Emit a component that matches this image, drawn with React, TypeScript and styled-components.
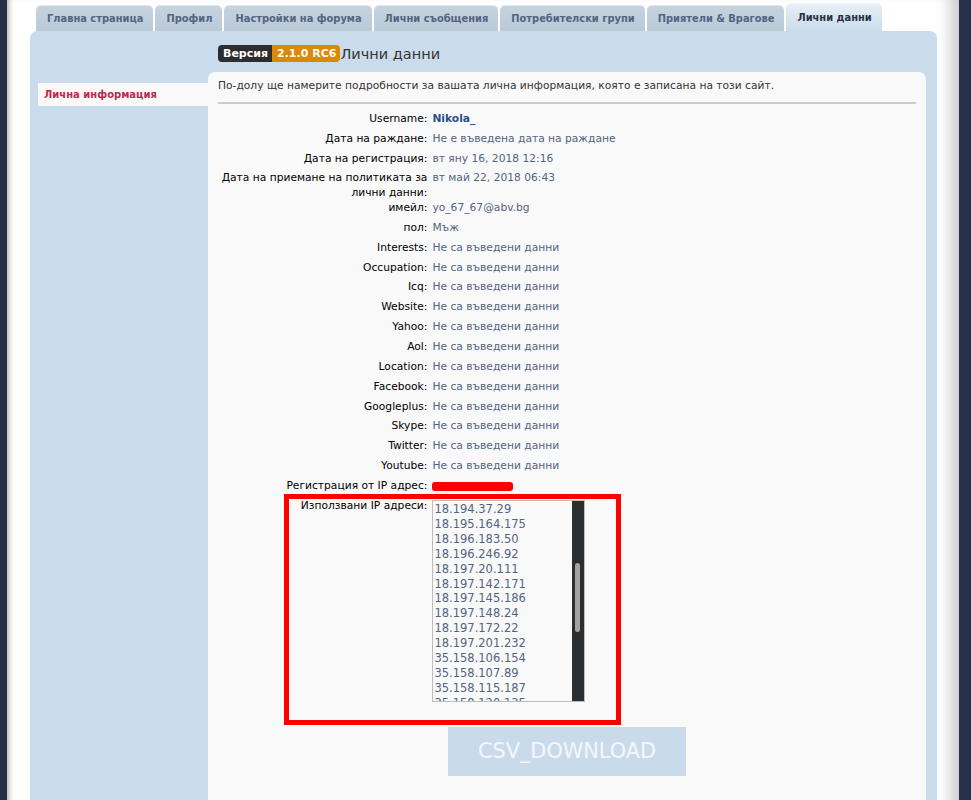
import { useLayoutEffect, useRef } from "react";
import styled, { createGlobalStyle } from "styled-components";

const GlobalStyle = createGlobalStyle`
  body {
    margin: 0;
    background: #263149;
    font-family: "DejaVu Sans", Verdana, sans-serif;
  }
`;

const Wrap = styled.div`
  margin: 0 12px 0 7px;
  min-height: 100vh;
  background: #fff;
  padding: 3px 22px 0 23px;
  box-shadow: inset 6px 0 5px -4px rgba(0, 0, 0, 0.3),
    inset -20px 0 16px -12px rgba(0, 0, 0, 0.22);
`;

const Tabs = styled.ul`
  display: flex;
  align-items: flex-end;
  gap: 2px;
  height: 28px;
  margin: 0 0 0 6px;
  padding: 0;
  list-style: none;
`;

const Tab = styled.li<{ $active?: boolean }>`
  display: flex;
  align-items: center;
  height: ${(p) => (p.$active ? 28 : 26)}px;
  padding: 0 10px 0 11px;
  border-radius: 5px 5px 0 0;
  white-space: nowrap;
  font-size: 9.9px;
  font-weight: bold;
  color: ${(p) => (p.$active ? "#28313f" : "#536482")};
  background: ${(p) =>
    p.$active
      ? "linear-gradient(#e8f0f8, #cadceb)"
      : "linear-gradient(#c6d4e0, #b9c9d6)"};
  box-shadow: inset 0 1px 0 rgba(255, 255, 255, 0.45);
`;

const Panel = styled.div`
  display: grid;
  grid-template-columns: 170px 1fr;
  grid-template-rows: auto 1fr;
  min-height: calc(100vh - 31px);
  padding: 0 11px 0 8px;
  background: #cadceb;
  border-radius: 7px 7px 0 0;
`;

const Header = styled.h2`
  grid-column: 2;
  display: flex;
  align-items: center;
  height: 17px;
  margin: 0;
  padding: 14px 10px 10px;
  font-size: 14.5px;
  font-weight: normal;
  color: #333;
`;

const Badge = styled.span<{ $tone: "dark" | "orange" }>`
  display: inline-flex;
  align-items: center;
  height: 17px;
  padding: 0 4px 0 5px;
  font-size: 11px;
  font-weight: bold;
  color: #fff;
  background: ${(p) => (p.$tone === "dark" ? "#2d2d2d" : "#dc8800")};
  border-radius: ${(p) => (p.$tone === "dark" ? "4px 0 0 4px" : "0 4px 4px 0")};
`;

const Sidebar = styled.ul`
  grid-column: 1;
  margin: 0;
  padding: 11px 0 0;
  list-style: none;
`;

const MenuItem = styled.li`
  height: 23px;
  line-height: 23px;
  padding-left: 6px;
  background: #f9f9f9;
  font-size: 10px;
  font-weight: bold;
  color: #bc2a4d;
`;

const Main = styled.div`
  grid-column: 2;
  padding: 7px 10px 40px;
  background: #f9f9f9;
  border-radius: 7px 7px 0 0;
  font-size: 10.7px;
  line-height: 14.85px;
`;

const Intro = styled.p`
  margin: 0;
  color: #333;
`;

const Rule = styled.hr`
  height: 0;
  margin: 8px 0 8px;
  border: 0;
  border-top: 2px solid #ccc;
`;

const Details = styled.dl`
  margin: 0;
`;

const Row = styled.div`
  position: relative;
  display: flex;
  align-items: flex-start;
`;

const Label = styled.dt`
  flex: 0 0 30%;
  margin: 0;
  text-align: right;
  color: #000;
`;

const Value = styled.dd<{ $strong?: boolean }>`
  margin: 0 0 0 5px;
  padding-bottom: 5px;
  color: ${(p) => (p.$strong ? "#2a5286" : "#536482")};
  font-weight: ${(p) => (p.$strong ? "bold" : "normal")};
`;

const Redacted = styled.span`
  display: inline-block;
  width: 81px;
  height: 9px;
  margin-top: 3px;
  background: #f00;
  border-radius: 3px;
  vertical-align: top;
`;

const IpBox = styled.div`
  display: flex;
  box-sizing: border-box;
  width: 153px;
  height: 202px;
  margin: 1px 0 0 5px;
  background: #f9f9f9;
  border: 1px solid #bdbdbd;
`;

const IpList = styled.div`
  flex: 1;
  padding: 3px 0 2px 1px;
  overflow: hidden;
  font-size: 11.5px;
  line-height: 14.875px;
  color: #536482;
`;

const ScrollTrack = styled.div`
  box-sizing: border-box;
  width: 12px;
  padding: 62px 4px 0 3px;
  background: #2a2e31;
`;

const ScrollThumb = styled.div`
  height: 69px;
  background: #a3a3a3;
  border-radius: 3px;
`;

const Marker = styled.div`
  position: absolute;
  left: 66px;
  top: -5px;
  box-sizing: border-box;
  width: 337px;
  height: 231px;
  border: 5px solid #f00;
  pointer-events: none;
`;

const Download = styled.button`
  display: block;
  width: 238px;
  height: 49px;
  margin: 25px auto 0;
  padding: 0;
  border: 0;
  background: #c9dbea;
  color: #f4f7fa;
  font-family: "DejaVu Sans", Verdana, sans-serif;
  font-size: 20.8px;
`;

const tabs = [
  "Главна страница",
  "Профил",
  "Настройки на форума",
  "Лични съобщения",
  "Потребителски групи",
  "Приятели & Врагове",
  "Лични данни",
];

const empty = "Не са въведени данни";

const fields: [string, string][] = [
  ["Дата на раждане:", "Не е въведена дата на раждане"],
  ["Дата на регистрация:", "вт яну 16, 2018 12:16"],
  ["Дата на приемане на политиката за лични данни:", "вт май 22, 2018 06:43"],
  ["имейл:", "yo_67_67@abv.bg"],
  ["пол:", "Мъж"],
  ["Interests:", empty],
  ["Occupation:", empty],
  ["Icq:", empty],
  ["Website:", empty],
  ["Yahoo:", empty],
  ["Aol:", empty],
  ["Location:", empty],
  ["Facebook:", empty],
  ["Googleplus:", empty],
  ["Skype:", empty],
  ["Twitter:", empty],
  ["Youtube:", empty],
];

const ips = [
  "13.48.12.201",
  "13.48.77.163",
  "13.53.146.20",
  "13.53.208.95",
  "18.130.92.14",
  "18.130.211.7",
  "18.184.33.160",
  "18.184.190.42",
  "18.185.4.231",
  "18.185.121.88",
  "18.185.243.19",
  "18.194.22.170",
  "18.194.37.29",
  "18.195.164.175",
  "18.196.183.50",
  "18.196.246.92",
  "18.197.20.111",
  "18.197.142.171",
  "18.197.145.186",
  "18.197.148.24",
  "18.197.172.22",
  "18.197.201.232",
  "35.158.106.154",
  "35.158.107.89",
  "35.158.115.187",
  "35.158.120.135",
  "35.158.161.46",
  "35.158.185.230",
  "35.159.14.102",
  "35.159.52.18",
  "52.28.71.244",
  "52.28.183.9",
  "52.29.104.66",
  "52.57.18.193",
  "52.58.233.101",
  "54.93.41.77",
  "54.93.170.12",
  "54.93.228.151",
];

function App() {
  const listRef = useRef<HTMLDivElement>(null);

  // the list opens scrolled down to the 13th address
  useLayoutEffect(() => {
    if (listRef.current) listRef.current.scrollTop = 180;
  }, []);

  return (
    <>
      <GlobalStyle />
      <Wrap>
        <Tabs>
          {tabs.map((t, i) => (
            <Tab key={t} $active={i === tabs.length - 1}>
              {t}
            </Tab>
          ))}
        </Tabs>
        <Panel>
          <Header>
            <Badge $tone="dark">Версия</Badge>
            <Badge $tone="orange">2.1.0 RC6</Badge>
            Лични данни
          </Header>
          <Sidebar>
            <MenuItem>Лична информация</MenuItem>
          </Sidebar>
          <Main>
            <Intro>
              По-долу ще намерите подробности за вашата лична информация, която
              е записана на този сайт.
            </Intro>
            <Rule />
            <Details>
              <Row>
                <Label>Username:</Label>
                <Value $strong>Nikola_</Value>
              </Row>
              {fields.map(([label, value]) => (
                <Row key={label}>
                  <Label>{label}</Label>
                  <Value>{value}</Value>
                </Row>
              ))}
              <Row>
                <Label>Регистрация от IP адрес:</Label>
                <Value>
                  <Redacted />
                </Value>
              </Row>
              <Row>
                <Label>Използвани IP адреси:</Label>
                <IpBox>
                  <IpList ref={listRef}>
                    {ips.map((ip) => (
                      <div key={ip}>{ip}</div>
                    ))}
                  </IpList>
                  <ScrollTrack>
                    <ScrollThumb />
                  </ScrollTrack>
                </IpBox>
                <Marker />
              </Row>
            </Details>
            <Download>CSV_DOWNLOAD</Download>
          </Main>
        </Panel>
      </Wrap>
    </>
  );
}

export default App;
